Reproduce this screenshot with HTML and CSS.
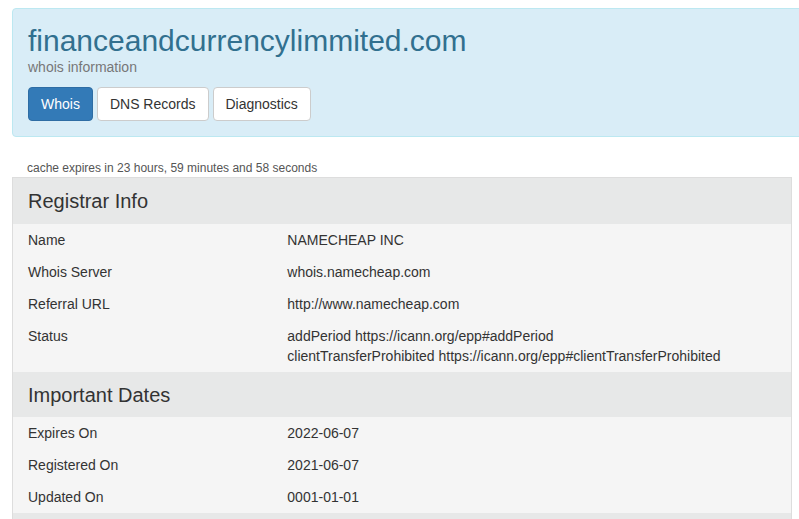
FILE: index.html
```html
<!DOCTYPE html>
<html lang="en">
<head>
    <meta charset="UTF-8">
    <meta name="viewport" content="width=device-width, initial-scale=1.0">
    <title>financeandcurrencylimmited.com - whois information</title>
    <link rel="stylesheet" href="styles.css">
</head>
<body>
    <div class="page">
        <div class="header-box">
            <h1 class="domain">financeandcurrencylimmited.com</h1>
            <div class="subtitle">whois information</div>
            <div class="tabs">
                <button class="btn btn-primary">Whois</button>
                <button class="btn">DNS Records</button>
                <button class="btn">Diagnostics</button>
            </div>
        </div>

        <div class="cache-note">cache expires in 23 hours, 59 minutes and 58 seconds</div>

        <div class="whois-table">
            <div class="section-title">Registrar Info</div>
            <div class="row">
                <div class="label">Name</div>
                <div class="value">NAMECHEAP INC</div>
            </div>
            <div class="row">
                <div class="label">Whois Server</div>
                <div class="value">whois.namecheap.com</div>
            </div>
            <div class="row">
                <div class="label">Referral URL</div>
                <div class="value">http://www.namecheap.com</div>
            </div>
            <div class="row">
                <div class="label">Status</div>
                <div class="value">
                    addPeriod https://icann.org/epp#addPeriod<br>
                    clientTransferProhibited https://icann.org/epp#clientTransferProhibited
                </div>
            </div>

            <div class="section-title section-next">Important Dates</div>
            <div class="row">
                <div class="label">Expires On</div>
                <div class="value">2022-06-07</div>
            </div>
            <div class="row">
                <div class="label">Registered On</div>
                <div class="value">2021-06-07</div>
            </div>
            <div class="row">
                <div class="label">Updated On</div>
                <div class="value">0001-01-01</div>
            </div>

            <!-- next section starts below the fold -->
            <div class="section-title section-next"></div>
        </div>
    </div>
</body>
</html>
```

FILE: styles.css
```css
html, body {
    overflow: hidden;
}

body {
    margin: 0;
    background-color: #fff;
    font-family: "Liberation Sans", Arial, sans-serif;
    font-size: 14px;
    line-height: 20px;
    color: #333;
}

.page {
    padding: 8px 7px 0 12px;
}

.header-box {
    width: 800px;
    background-color: #d9edf7;
    border: 1px solid #bce8f1;
    border-radius: 4px;
    padding: 15px;
}

.domain {
    margin: 0;
    font-size: 30px;
    font-weight: normal;
    line-height: 33px;
    color: #31708f;
}

.subtitle {
    color: #777;
    font-size: 14px;
}

.tabs {
    margin-top: 10px;
    display: flex;
    gap: 4px;
}

.btn {
    font-family: inherit;
    font-size: 14px;
    line-height: 20px;
    padding: 6px 12px;
    background-color: #fff;
    border: 1px solid #ccc;
    border-radius: 4px;
    color: #333;
    cursor: pointer;
}

.btn:hover {
    background-color: #e6e6e6;
}

.btn-primary {
    background-color: #337ab7;
    border-color: #2e6da4;
    color: #fff;
}

.btn-primary:hover {
    background-color: #286090;
}

.cache-note {
    margin-top: 23px;
    padding-left: 15px;
    font-size: 12px;
    line-height: 17px;
    color: #555;
}

.whois-table {
    border: 1px solid #ddd;
    border-bottom: none;
}

.section-title {
    background-color: #e7e8e8;
    font-size: 20px;
    line-height: 22px;
    min-height: 22px;
    padding: 12px 15px;
}

.section-next {
    padding-bottom: 11px;
}

.row {
    display: grid;
    grid-template-columns: 1fr 2fr;
    background-color: #f5f5f5;
    padding: 6px 0;
}

.label,
.value {
    padding: 0 15px;
}
```
